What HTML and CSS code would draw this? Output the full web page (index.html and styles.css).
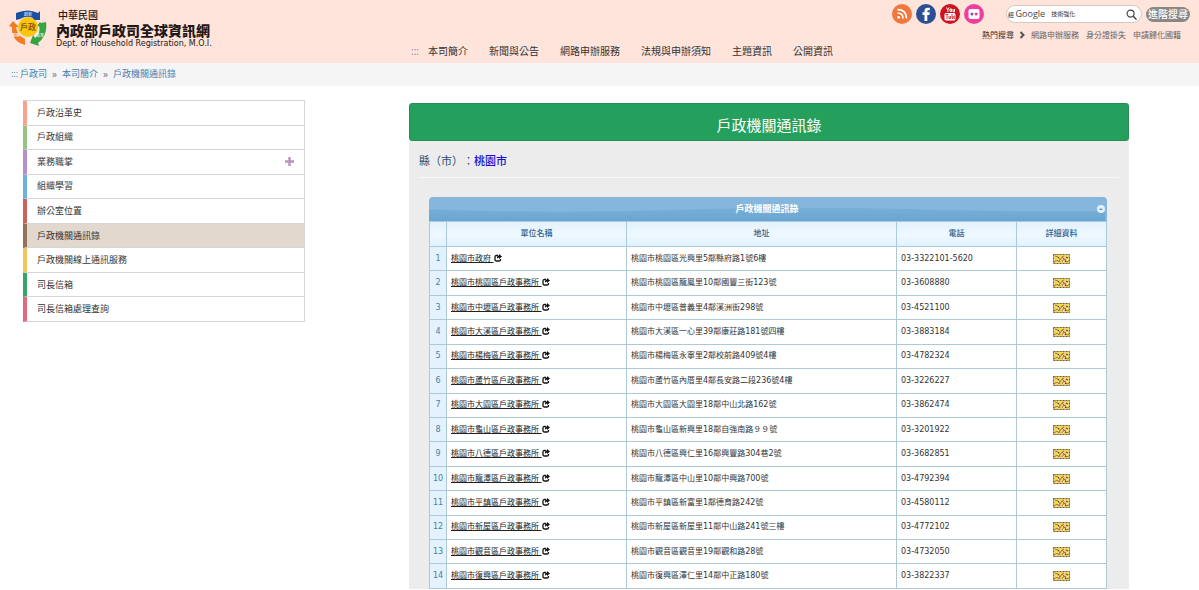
FILE: index.html
```html
<!DOCTYPE html>
<html lang="zh-Hant">
<head>
<meta charset="utf-8">
<title>戶政機關通訊錄</title>
<link rel="stylesheet" href="styles.css">
</head>
<body>
<svg class="defs" aria-hidden="true">
  <symbol id="share" viewBox="0 0 16 16"><path d="M8 3H5Q2 3 2 6v5q0 3 3 3h5q3 0 3-3v-1" fill="none" stroke="#111" stroke-width="2.6"/><path d="M10 0l6 5-6 5V7Q7 7 6 10 5 3 10 3z" fill="#111"/></symbol>
  <symbol id="card" viewBox="0 0 17 10"><path d="M0 0h17v10H0z" fill="#ecd27c"/><path d="M.5.5h16v9H.5z" fill="none" stroke="#75653a" stroke-dasharray="2 1"/><path d="M2 2l3 1 2 3 2-3 2-1M1 8l3-2 2 2M9 8l2-3 3 3 2-1" fill="none" stroke="#9c7e28"/><path d="M3 4h2v2H3zM7 1h2v2H7zM12 2h2v1h-2z" fill="#f4e21e"/><path d="M9 3l2 2 2 1M6 6l1 2" stroke="#c9583c" fill="none"/><path d="M13 3l2 1M5 3l1 1M12 7l1 1" stroke="#3f3a2b"/><path d="M10 7h1v1h-1zM5 5h1v1H5zM14 5h1v1h-1z" fill="#fff6cf"/></symbol>
</svg>
<header class="header">
  <a class="brand" href="#">
    <svg class="logo" viewBox="0 0 38 38" aria-hidden="true">
      <path d="M7 4Q19-1 29 4l2-2v9h-9l2-2Q18 6 11 10L7 11z" fill="#1b4f9f"/>
      <path d="M32 14l5-1q2 13-8 21l1 3-9-3 3-8 2 3q6-5 4-12l-3 1 4-5z" fill="#35a443"/>
      <path d="M0 17l4-5 6 6-3 0q1 8 9 12l0 6Q2 32 3 18z" fill="#f27c22"/>
      <circle cx="19" cy="18" r="10" fill="#fbc60c"/>
      <text x="19" y="21" class="logo-name">戶政</text>
      <text x="19" y="7" class="logo-tag">創新</text>
      <text x="7" y="28" class="logo-tag">服務</text>
      <text x="31" y="28" class="logo-tag">效率</text>
    </svg>
    <span class="brand-text">
      <span class="country">中華民國</span>
      <span class="site">內政部戶政司全球資訊網</span>
      <span class="english">Dept. of Household Registration, M.O.I.</span>
    </span>
  </a>
  <nav class="nav">
    <a class="key" href="#">:::</a>
    <a href="#">本司簡介</a><a href="#">新聞與公告</a><a href="#">網路申辦服務</a><a href="#">法規與申辦須知</a><a href="#">主題資訊</a><a href="#">公開資訊</a>
  </nav>
  <div class="tools">
    <div class="tools-row">
      <div class="social">
        <a href="#" aria-label="RSS"><svg viewBox="0 0 20 20"><circle cx="10" cy="10" r="10" fill="#f0783c"/><circle cx="6.7" cy="13.3" r="1.4" fill="#fff"/><path d="M5.5 9q5.500 0 5.500 5.500M5.500 5.600q9 0 9 9" fill="none" stroke="#fff" stroke-width="1.6"/></svg></a>
        <a href="#" aria-label="Facebook"><svg viewBox="0 0 20 20"><circle cx="10" cy="10" r="10" fill="#2c4f94"/><path d="M8.5 17v-6H6.5V8.3h2V7q0-3.3 3.300-3.300h2v2.600h-1.300q-1.200 0-1.200 1.200v.8h2.500l-.4 2.700h-2.100v6z" fill="#fff"/></svg></a>
        <a href="#" aria-label="YouTube"><svg viewBox="0 0 20 20"><circle cx="10" cy="10" r="10" fill="#cc1420"/><path d="M6.500 3.500l1.300 2.500v2M9 3.500L7.800 6M10 5v2.500h1.500V5zM13 5v2.700h1.500V5" fill="none" stroke="#fff"/><rect x="4.500" y="9" width="11" height="7.500" rx="1.500" fill="#fff"/><path d="M5.500 10.500h3M7 10.500V15M9 12v2.500h1.500V12M12 10v4.500h1V12M15 12h-1v2.500h1" fill="none" stroke="#cc1420" stroke-width=".8"/></svg></a>
        <a href="#" aria-label="Flickr"><svg viewBox="0 0 20 20"><circle cx="10" cy="10" r="10" fill="#ee3fa0"/><rect x="4.500" y="5" width="11" height="10" rx="2" fill="#fff"/><circle cx="8" cy="10" r="1.500" fill="#7d4fb4"/><circle cx="12.200" cy="10" r="1.500" fill="#ee3fa0"/></svg></a>
      </div>
      <form class="search">
        <label for="q">經 <b>Google</b></label>
        <input id="q" type="text" placeholder="技術強化">
        <button class="go" type="button" aria-label="搜尋"><svg viewBox="0 0 12 12"><circle cx="5" cy="5" r="3.800" fill="none" stroke="#444" stroke-width="1.300"/><path d="M8 8l3.500 3.500" stroke="#444" stroke-width="1.600"/></svg></button>
      </form>
      <button class="advanced" type="button">進階搜尋</button>
    </div>
    <div class="hot">
      <span>熱門搜尋</span><svg viewBox="0 0 7 8" aria-hidden="true"><path d="M1.500 1l3 3-3 3" fill="none" stroke="#555" stroke-width="2"/></svg><a href="#">網路申辦服務</a><a href="#">身分證掛失</a><a href="#">申請歸化國籍</a>
    </div>
  </div>
</header>
<nav class="crumbs"><a href="#">:::</a><a href="#">戶政司</a><i>»</i><a href="#">本司簡介</a><i>»</i><a href="#">戶政機關通訊錄</a></nav>
<main class="main">
  <ul class="side">
    <li class="coral"><a href="#">戶政沿革史</a></li>
    <li class="lime"><a href="#">戶政組織</a></li>
    <li class="purple"><a href="#">業務職掌</a><svg class="plus" viewBox="0 0 9 9" aria-hidden="true"><path d="M4.500 0v9M0 4.500h9" stroke="#b795bb" stroke-width="2.400"/></svg></li>
    <li class="blue"><a href="#">組織學習</a></li>
    <li class="red"><a href="#">辦公室位置</a></li>
    <li class="brown current"><a href="#">戶政機關通訊錄</a></li>
    <li class="yellow"><a href="#">戶政機關線上通訊服務</a></li>
    <li class="green"><a href="#">司長信箱</a></li>
    <li class="rose"><a href="#">司長信箱處理查詢</a></li>
  </ul>
  <section class="content">
    <h1>戶政機關通訊錄</h1>
    <p class="city">縣（市）：<b>桃園市</b></p>
    <div class="grid">
      <div class="grid-title">
        <svg class="wave" viewBox="0 0 678 24" preserveAspectRatio="none" aria-hidden="true"><defs><linearGradient id="w" x2="0" y2="1"><stop stop-color="#79afd7"/><stop offset="1" stop-color="#68a5d1"/></linearGradient></defs><path d="M0 12Q120 17 240 13T480 12T678 14V24H0z" fill="url(#w)"/></svg>
        <h2>戶政機關通訊錄</h2>
        <button type="button" aria-label="收合"><svg viewBox="0 0 8 8"><circle cx="4" cy="4" r="4" fill="#e3f0f9"/><path d="M2 5l2-2 2 2z" fill="#6097c0"/></svg></button>
      </div>
      <table>
        <colgroup><col class="c-no"><col class="c-name"><col class="c-addr"><col class="c-tel"><col class="c-more"></colgroup>
        <thead><tr><th></th><th>單位名稱</th><th>地址</th><th>電話</th><th>詳細資料</th></tr></thead>
        <tbody>
          <tr><td>1</td><td><a href="#">桃園市政府 <svg><use href="#share"/></svg></a></td><td>桃園市桃園區光興里5鄰縣府路1號6樓</td><td>03-3322101-5620</td><td><a href="#" aria-label="詳細資料"><svg><use href="#card"/></svg></a></td></tr>
          <tr><td>2</td><td><a href="#">桃園市桃園區戶政事務所 <svg><use href="#share"/></svg></a></td><td>桃園市桃園區龍鳳里10鄰國豐三街123號</td><td>03-3608880</td><td><a href="#" aria-label="詳細資料"><svg><use href="#card"/></svg></a></td></tr>
          <tr><td>3</td><td><a href="#">桃園市中壢區戶政事務所 <svg><use href="#share"/></svg></a></td><td>桃園市中壢區普義里4鄰溪洲街298號</td><td>03-4521100</td><td><a href="#" aria-label="詳細資料"><svg><use href="#card"/></svg></a></td></tr>
          <tr><td>4</td><td><a href="#">桃園市大溪區戶政事務所 <svg><use href="#share"/></svg></a></td><td>桃園市大溪區一心里39鄰康莊路181號四樓</td><td>03-3883184</td><td><a href="#" aria-label="詳細資料"><svg><use href="#card"/></svg></a></td></tr>
          <tr><td>5</td><td><a href="#">桃園市楊梅區戶政事務所 <svg><use href="#share"/></svg></a></td><td>桃園市楊梅區永寧里2鄰校前路409號4樓</td><td>03-4782324</td><td><a href="#" aria-label="詳細資料"><svg><use href="#card"/></svg></a></td></tr>
          <tr><td>6</td><td><a href="#">桃園市蘆竹區戶政事務所 <svg><use href="#share"/></svg></a></td><td>桃園市蘆竹區內厝里4鄰長安路二段236號4樓</td><td>03-3226227</td><td><a href="#" aria-label="詳細資料"><svg><use href="#card"/></svg></a></td></tr>
          <tr><td>7</td><td><a href="#">桃園市大園區戶政事務所 <svg><use href="#share"/></svg></a></td><td>桃園市大園區大園里18鄰中山北路162號</td><td>03-3862474</td><td><a href="#" aria-label="詳細資料"><svg><use href="#card"/></svg></a></td></tr>
          <tr><td>8</td><td><a href="#">桃園市龜山區戶政事務所 <svg><use href="#share"/></svg></a></td><td>桃園市龜山區新興里18鄰自強南路９９號</td><td>03-3201922</td><td><a href="#" aria-label="詳細資料"><svg><use href="#card"/></svg></a></td></tr>
          <tr><td>9</td><td><a href="#">桃園市八德區戶政事務所 <svg><use href="#share"/></svg></a></td><td>桃園市八德區興仁里16鄰興豐路304巷2號</td><td>03-3682851</td><td><a href="#" aria-label="詳細資料"><svg><use href="#card"/></svg></a></td></tr>
          <tr><td>10</td><td><a href="#">桃園市龍潭區戶政事務所 <svg><use href="#share"/></svg></a></td><td>桃園市龍潭區中山里10鄰中興路700號</td><td>03-4792394</td><td><a href="#" aria-label="詳細資料"><svg><use href="#card"/></svg></a></td></tr>
          <tr><td>11</td><td><a href="#">桃園市平鎮區戶政事務所 <svg><use href="#share"/></svg></a></td><td>桃園市平鎮區新富里1鄰德育路242號</td><td>03-4580112</td><td><a href="#" aria-label="詳細資料"><svg><use href="#card"/></svg></a></td></tr>
          <tr><td>12</td><td><a href="#">桃園市新屋區戶政事務所 <svg><use href="#share"/></svg></a></td><td>桃園市新屋區新屋里11鄰中山路241號三樓</td><td>03-4772102</td><td><a href="#" aria-label="詳細資料"><svg><use href="#card"/></svg></a></td></tr>
          <tr><td>13</td><td><a href="#">桃園市觀音區戶政事務所 <svg><use href="#share"/></svg></a></td><td>桃園市觀音區觀音里19鄰觀和路28號</td><td>03-4732050</td><td><a href="#" aria-label="詳細資料"><svg><use href="#card"/></svg></a></td></tr>
          <tr><td>14</td><td><a href="#">桃園市復興區戶政事務所 <svg><use href="#share"/></svg></a></td><td>桃園市復興區澤仁里14鄰中正路180號</td><td>03-3822337</td><td><a href="#" aria-label="詳細資料"><svg><use href="#card"/></svg></a></td></tr>
        </tbody>
      </table>
    </div>
  </section>
</main>
</body>
</html>
```
FILE: styles.css
```css
* { box-sizing: border-box; }
body {
  margin: 0;
  min-height: 100vh;
  display: flex;
  flex-direction: column;
  background: #fff;
  color: #333;
  font: 9px/12px "Open Sans", "Noto Sans CJK TC", sans-serif;
}
a { color: inherit; text-decoration: none; }
svg { display: block; }
button { padding: 0; border: 0; background: none; font: inherit; cursor: pointer; }
h1, h2, p, ul { margin: 0; padding: 0; }
.defs { position: absolute; width: 0; height: 0; }

.header {
  display: grid;
  grid-template-columns: 400px 1fr auto;
  min-height: 63px;
  padding: 0 9px;
  background: #ffe4db;
}
.brand { display: flex; gap: 9px; align-self: start; padding-top: 9px; color: #231815; }
.logo { width: 38px; height: 38px; }
.logo-name { font-size: 8px; font-weight: 700; text-anchor: middle; fill: #8a5a12; }
.logo-tag { font-size: 4px; text-anchor: middle; fill: #fff; }
.brand-text { display: flex; flex-direction: column; white-space: nowrap; }
.country { padding-left: 2px; font-size: 10px; font-weight: 500; line-height: 13px; }
.site { font-size: 14px; font-weight: 900; line-height: 17px; }
.english { font: 8px/9px "DejaVu Sans", sans-serif; }
.nav { display: flex; align-self: end; gap: 21px; padding: 0 0 4px 2px; font-size: 10px; line-height: 16px; white-space: nowrap; }
.nav .key { margin-right: -12px; color: #7b86a8; }
.tools { white-space: nowrap; }
.tools-row { display: flex; align-items: center; padding-top: 4px; }
.social { display: flex; gap: 4px; margin-right: 22px; }
.social svg { width: 20px; height: 20px; }
.search {
  display: flex;
  align-items: center;
  width: 136px;
  height: 18px;
  margin-right: 4px;
  border: 1px solid #d5c9c4;
  border-radius: 9px;
  background: #fff;
  font-size: 6px;
}
.search label { padding-left: 1px; }
.search b { font-size: 9px; font-weight: 400; color: #444; }
.search input { flex: 1; min-width: 0; padding: 0 0 0 6px; border: 0; background: none; font: inherit; }
.search input::placeholder { color: #333; opacity: 1; }
.go { margin-right: 4px; }
.go svg { width: 11px; height: 11px; }
.advanced { height: 15px; padding: 0 2px; border-radius: 8px; background: #8b8683; color: #fff; font-size: 10px; font-weight: 500; line-height: 15px; }
.hot { display: flex; align-items: center; justify-content: flex-end; gap: 7px; padding: 5px 9px 0 0; color: #6b625e; font-size: 8px; }
.hot span { color: #333; }
.hot svg { width: 7px; height: 8px; margin: 0 -2px; }

.crumbs { display: flex; gap: 5px; padding: 5px 11px 6px; background: #f5f5f5; color: #4680ae; }
.crumbs a:first-child { margin-right: -3px; }
.crumbs i { color: #777; font-size: 10px; font-style: normal; }

.main {
  flex: 1;
  display: grid;
  grid-template-columns: 282fr 720fr;
  gap: 104px;
  padding: 14px 70px 1px 23px;
}
.side {
  display: grid;
  grid-auto-rows: 1fr;
  align-self: start;
  min-height: 222px;
  border: 1px solid #d6d6d6;
  border-width: 1px 1px 0 0;
  list-style: none;
}
.side li {
  display: flex;
  align-items: center;
  justify-content: space-between;
  padding: 0 10px;
  border-bottom: 1px solid #d6d6d6;
  border-left: 4px solid;
}
.side a { color: #333; }
.plus { width: 9px; height: 9px; }
.side .coral { border-left-color: #fba28c; }
.side .lime { border-left-color: #95c485; }
.side .purple { border-left-color: #b98fc5; }
.side .blue { border-left-color: #6cb3dc; }
.side .red { border-left-color: #cc625a; }
.side .brown { border-left-color: #927259; }
.side .yellow { border-left-color: #f1c75d; }
.side .green { border-left-color: #34a56b; }
.side .rose { border-left-color: #e06b80; }
.current { background: #e2d8ce; }

.content { display: flex; flex-direction: column; margin-top: 3px; border-radius: 4px 4px 0 0; background: #ececec; }
.content h1 {
  padding: 10px 0 4px;
  border: 1px solid #2c8a55;
  border-radius: 3px;
  background: #25a05c;
  color: #fff;
  font-size: 15px;
  font-weight: 400;
  line-height: 22px;
  text-align: center;
}
.city { margin: 0 10px 19px; padding: 12px 0 8px; border-bottom: 1px solid #f8f8f8; color: #2e4a6f; font-size: 11px; line-height: 16px; text-spacing-trim: space-all; }
.city b { color: #1c0fd0; font-weight: 500; }
.grid { flex: 1; display: flex; flex-direction: column; margin: 0 22px 0 20px; }
.grid-title {
  display: grid;
  grid-template-columns: 1fr auto;
  align-items: center;
  height: 24px;
  padding-right: 2px;
  overflow: hidden;
  border-radius: 4px 4px 0 0;
  background: #87b6dc;
  color: #fff;
}
.wave { grid-area: 1 / 1 / 2 / 3; width: 100%; height: 24px; }
.grid-title h2 { grid-area: 1 / 1 / 2 / 3; font-size: 9px; font-weight: 700; text-align: center; }
.grid-title button { grid-area: 1 / 2; }
.grid-title button svg { width: 8px; height: 8px; }

table { flex: 1; width: 100%; border-collapse: collapse; table-layout: fixed; background: #fff; font: 8px/12px "DejaVu Sans", "Noto Sans CJK TC", sans-serif; }
.c-no { width: 17px; }
.c-name { width: 180px; }
.c-addr { width: 40%; }
.c-tel { width: 120px; }
.c-more { width: 90px; }
th, td { padding: 0 4px; border: 1px solid #adc9d6; text-align: left; white-space: nowrap; }
th { height: 25px; border-color: #a8cbe0; background: linear-gradient(#e4f2fc, #eef8ff 50%, #e0f1fd); color: #2e6590; font-weight: 500; text-align: center; }
td:first-child { padding: 0; background: #e3f2fc; color: #4a7ea5; text-align: center; }
td:nth-child(2) a { color: #222; text-decoration: underline; text-underline-offset: 1px; }
td:nth-child(2) svg { display: inline-block; width: 8px; height: 8px; vertical-align: -1px; }
td:last-child svg { width: 17px; height: 10px; margin: 0 auto; }
```
